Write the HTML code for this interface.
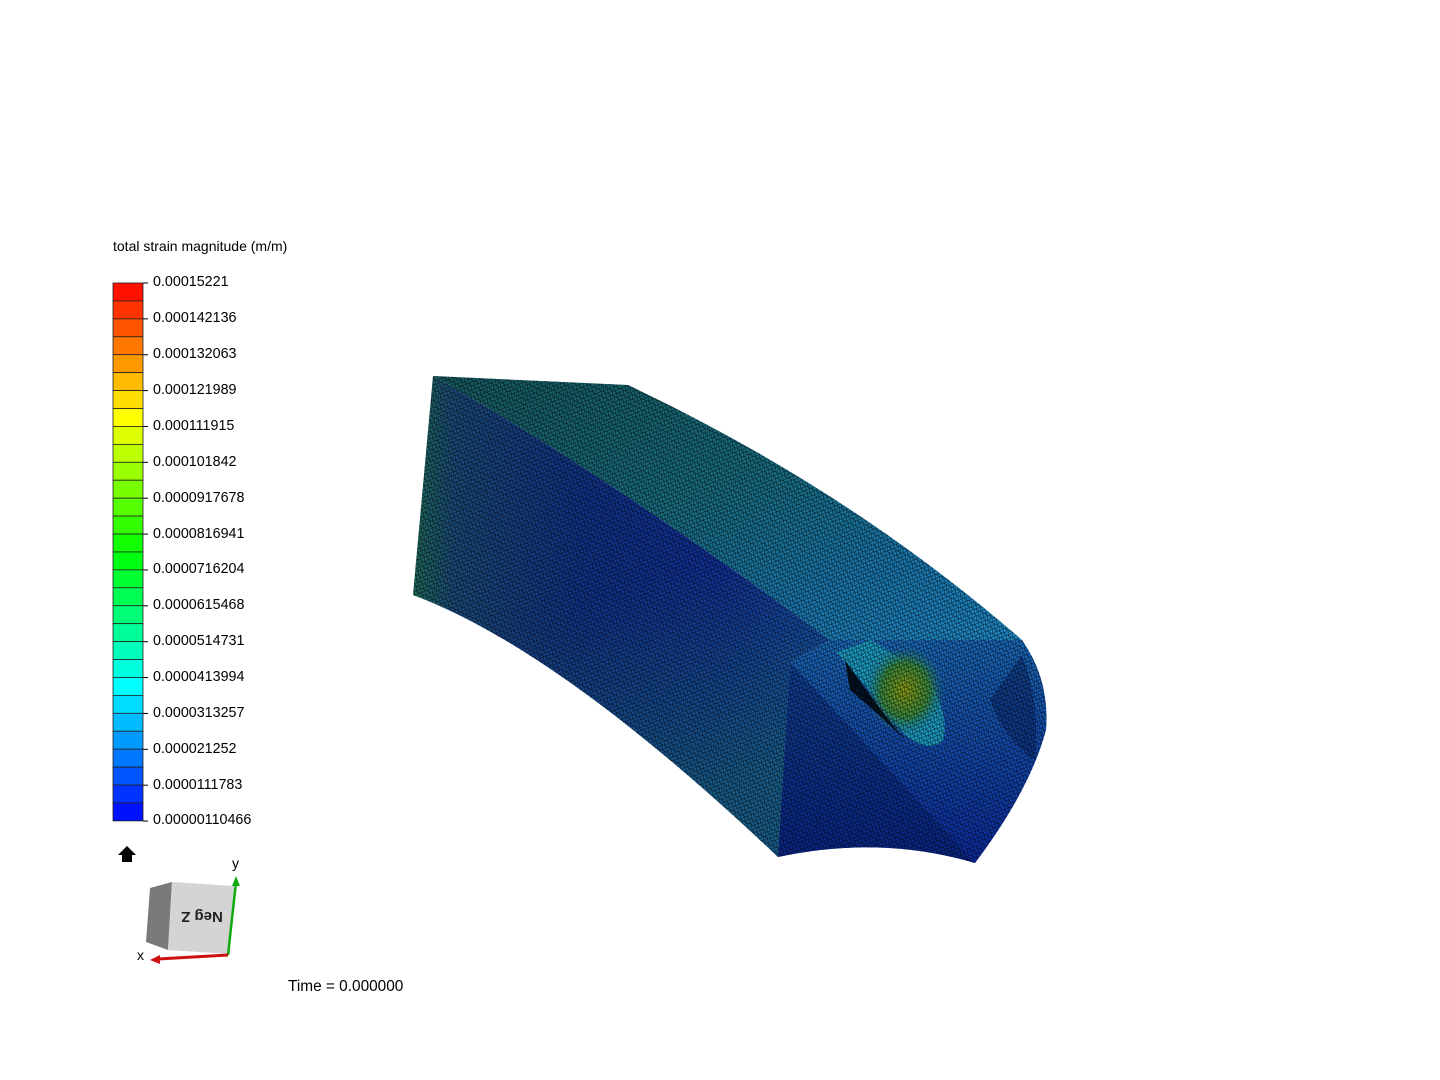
<!DOCTYPE html>
<html><head><meta charset="utf-8"><style>
html,body{margin:0;padding:0;background:#fff;width:1440px;height:1080px;overflow:hidden;font-family:"Liberation Sans",Arial,sans-serif;}
.t{position:absolute;font-size:14.3px;color:#000;white-space:nowrap;}
</style></head><body>
<div class="t" style="left:113px;top:238px;font-size:14px">total strain magnitude (m/m)</div>
<svg id="bar" width="1440" height="1080" style="position:absolute;left:0;top:0">
<defs>
<linearGradient id="gf" x1="0" y1="0" x2="1" y2="0">
<stop offset="0" stop-color="#1f6a5a"/><stop offset="0.1" stop-color="#1a4a7a"/><stop offset="0.4" stop-color="#12348a"/><stop offset="0.75" stop-color="#12309a"/><stop offset="1" stop-color="#1540b0"/></linearGradient>
<linearGradient id="gfb" x1="0" y1="0" x2="0.3" y2="1">
<stop offset="0.55" stop-color="#1a6a80" stop-opacity="0"/><stop offset="1" stop-color="#1a7080" stop-opacity="0.7"/></linearGradient>
<linearGradient id="gt" x1="0" y1="0" x2="1" y2="1">
<stop offset="0" stop-color="#155a60"/><stop offset="0.45" stop-color="#186e80"/><stop offset="0.75" stop-color="#1a78b0"/><stop offset="1" stop-color="#1e8ac8"/></linearGradient>
<linearGradient id="ge" x1="0" y1="0" x2="0" y2="1">
<stop offset="0" stop-color="#1a68b8"/><stop offset="1" stop-color="#0c2aa0"/></linearGradient>
<radialGradient id="hot" cx="0.5" cy="0.5" r="0.5">
<stop offset="0" stop-color="#8a9a10"/><stop offset="0.6" stop-color="#3a8a40"/><stop offset="1" stop-color="#1a80a0" stop-opacity="0"/></radialGradient>
<pattern id="mesh" width="5" height="5" patternUnits="userSpaceOnUse" patternTransform="rotate(25)">
<path d="M0,0 L5,0 M0,0 L2.5,5 M5,0 L2.5,5 M0,5 L5,5" stroke="#000" stroke-width="0.6" fill="none" opacity="0.75"/></pattern>
</defs>
<g id="bands"></g>
<!-- model -->
<path d="M433,376 Q600,470 830,640 L790,662 L778,857 Q560,650 413,595 Z" fill="url(#gf)"/>
<path d="M433,376 Q600,470 830,640 L790,662 L778,857 Q560,650 413,595 Z" fill="url(#gfb)"/>
<path d="M433,376 L628,385 Q850,490 1022,640 L830,640 Q600,470 433,376 Z" fill="url(#gt)"/>
<path d="M830,640 L1022,640 Q1050,680 1046,730 Q1030,790 975,863 Q880,835 778,857 L790,662 Z" fill="url(#ge)"/>
<path d="M836,652 Q870,690 905,735 Q925,752 942,742 Q950,725 935,690 Q900,655 870,640 Z" fill="#1a9ac0"/>
<ellipse cx="905" cy="690" rx="40" ry="45" fill="url(#hot)"/>
<path d="M845,660 Q880,710 905,740 Q880,715 850,690 Z" fill="#000" opacity="0.8"/>
<path d="M990,700 L1022,655 Q1040,700 1035,760 Q1005,740 990,700 Z" fill="#0a2a70" opacity="0.6"/>
<path d="M790,662 Q880,760 975,863 Q880,835 778,857 Z" fill="#082070" opacity="0.5"/>
<g fill="url(#mesh)">
<path d="M433,376 Q600,470 830,640 L790,662 L778,857 Q560,650 413,595 Z"/>
<path d="M433,376 L628,385 Q850,490 1022,640 L830,640 Q600,470 433,376 Z"/>
<path d="M830,640 L1022,640 Q1050,680 1046,730 Q1030,790 975,863 Q880,835 778,857 L790,662 Z"/>
</g>
<!-- home icon -->
<path d="M127,846 L136,855 L132,855 L132,862 L122,862 L122,855 L118,855 Z" fill="#000"/>
<!-- cube -->
<polygon points="150,888 172,882 168,950 146,942" fill="#7a7a7a"/>
<polygon points="172,882 234,886 230,954 168,950" fill="#d4d4d4"/>
<text x="200" y="922" font-size="15" font-weight="bold" fill="#222" text-anchor="middle" transform="rotate(180 201 917)">Neg Z</text>
<line x1="228" y1="955" x2="236" y2="882" stroke="#1a1" stroke-width="2.5"/>
<polygon points="236,876 232,886 240,886" fill="#1a1"/>
<line x1="228" y1="955" x2="158" y2="959" stroke="#c11" stroke-width="3"/>
<polygon points="150,960 160,955 160,964" fill="#c11"/>
<text x="232" y="868" font-size="14">y</text>
<text x="137" y="960" font-size="14">x</text>
</svg>
<div class="t" style="left:153px;top:274px">0.00015221</div>
<div class="t" style="left:153px;top:310px">0.000142136</div>
<div class="t" style="left:153px;top:346px">0.000132063</div>
<div class="t" style="left:153px;top:382px">0.000121989</div>
<div class="t" style="left:153px;top:418px">0.000111915</div>
<div class="t" style="left:153px;top:454px">0.000101842</div>
<div class="t" style="left:153px;top:490px">0.0000917678</div>
<div class="t" style="left:153px;top:526px">0.0000816941</div>
<div class="t" style="left:153px;top:561px">0.0000716204</div>
<div class="t" style="left:153px;top:597px">0.0000615468</div>
<div class="t" style="left:153px;top:633px">0.0000514731</div>
<div class="t" style="left:153px;top:669px">0.0000413994</div>
<div class="t" style="left:153px;top:705px">0.0000313257</div>
<div class="t" style="left:153px;top:741px">0.000021252</div>
<div class="t" style="left:153px;top:777px">0.0000111783</div>
<div class="t" style="left:153px;top:812px">0.00000110466</div>
<div class="t" style="left:288px;top:978px;font-size:15.4px">Time = 0.000000</div>
<script>
var g=document.getElementById('bands'),s='';
for(var i=0;i<30;i++){var h=240*(i+0.5)/30;var y=283+i*17.93;
s+='<rect x="113" y="'+y.toFixed(2)+'" width="30" height="17.93" fill="hsl('+h+',100%,50%)" stroke="#222" stroke-width="0.8"/>';}
for(var j=0;j<16;j++){var ty=283+j*35.87;s+='<line x1="143" y1="'+ty+'" x2="148" y2="'+ty+'" stroke="#000"/>';}
g.innerHTML=s;
</script>
</body></html>
